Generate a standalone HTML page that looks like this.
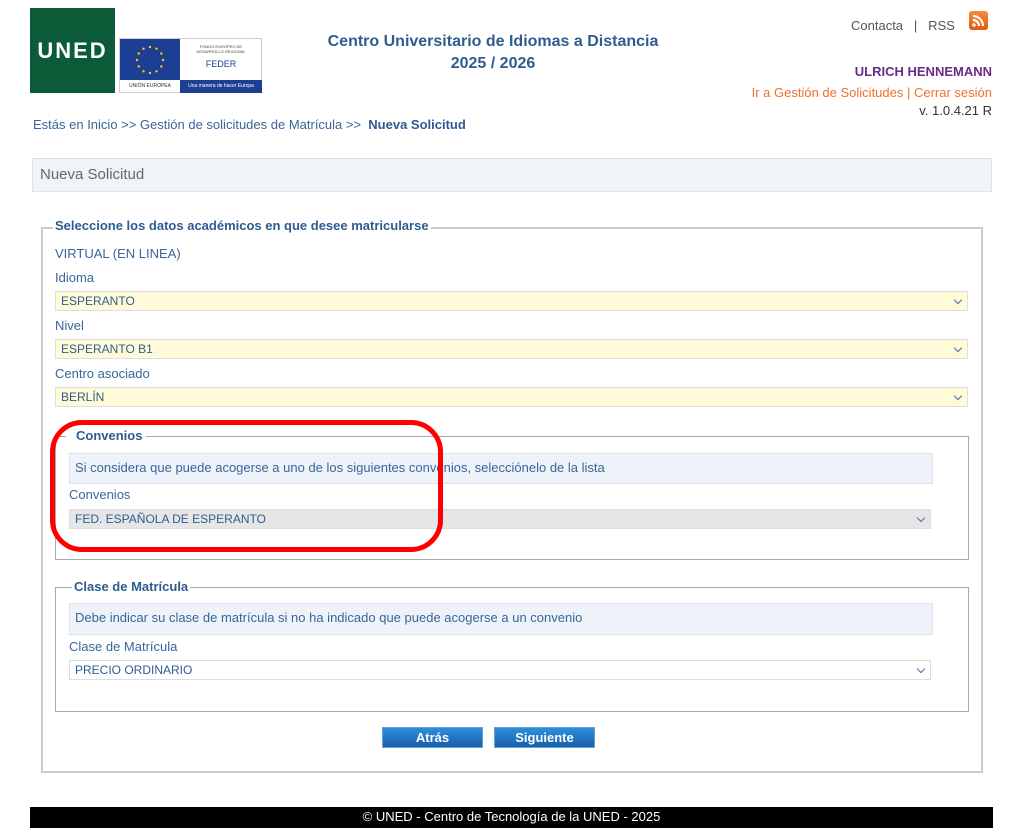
<!DOCTYPE html>
<html><head><meta charset="utf-8"><style>
*{margin:0;padding:0;box-sizing:border-box}
body{width:1024px;height:828px;background:#fff;font-family:"Liberation Sans",sans-serif;font-size:13px;color:#3a659a;position:relative;overflow:hidden}
.a{position:absolute;white-space:nowrap}
.box{position:absolute;border:1px solid #aaa}
.sel{position:absolute;border:1px solid #ddd;font-size:12px;padding:2px 5px;height:20px;line-height:15px;color:#2f5c8f}
.sel:after{content:"";position:absolute;right:6px;top:5px;width:5px;height:5px;border-right:1.5px solid #4a6ea0;border-bottom:1.5px solid #4a6ea0;transform:rotate(45deg)}
.y{background:#fffbd8}
.leg{position:absolute;background:#fff;padding:0 2px;font-weight:bold;color:#2f5c8f;font-size:13px}
.info{position:absolute;background:#eef3f9;border:1px solid #dbe4ee;padding:6px 5px;font-size:13px;color:#3a659a}
.btn{position:absolute;height:21px;width:101px;background:linear-gradient(#2c8fdc,#1a5fa8);color:#fff;font-weight:bold;font-size:13px;text-align:center;line-height:20px;border:1px solid #6aa0d0}
</style></head><body>
<div class="a" style="left:30px;top:8px;width:85px;height:85px;background:#0b5a38;color:#fff;font-weight:bold;font-size:22px;letter-spacing:2px;line-height:85px;text-align:center">UNED</div>
<div class="a" style="left:119px;top:38px;width:143px;height:55px;border:1px solid #ccd">
 <div class="a" style="left:0;top:0;width:60px;height:41px;background:#1c3f94"></div>
 <svg class="a" style="left:14px;top:5px" width="32" height="32"><g fill="#fc0"><circle cx="16" cy="3" r="1.2"/><circle cx="22.5" cy="4.7" r="1.2"/><circle cx="27.3" cy="9.5" r="1.2"/><circle cx="29" cy="16" r="1.2"/><circle cx="27.3" cy="22.5" r="1.2"/><circle cx="22.5" cy="27.3" r="1.2"/><circle cx="16" cy="29" r="1.2"/><circle cx="9.5" cy="27.3" r="1.2"/><circle cx="4.7" cy="22.5" r="1.2"/><circle cx="3" cy="16" r="1.2"/><circle cx="4.7" cy="9.5" r="1.2"/><circle cx="9.5" cy="4.7" r="1.2"/></g></svg>
 <div class="a" style="left:62px;top:5px;width:78px;text-align:center;font-size:4px;color:#444;line-height:5px">FONDO EUROPEO DE<br>DESARROLLO REGIONAL</div>
 <div class="a" style="left:62px;top:20px;width:78px;text-align:center;font-size:9px;color:#1c3f94">FEDER</div>
 <div class="a" style="left:0;top:42px;width:60px;text-align:center;font-size:5px;color:#333;line-height:11px">UNIÓN EUROPEA</div>
 <div class="a" style="left:60px;top:41px;width:82px;height:13px;background:#1c3f94;color:#fff;font-size:5px;line-height:13px;text-align:center">Una manera de hacer Europa</div>
</div>
<div class="a" style="left:300px;top:31px;width:386px;text-align:center;font-weight:bold;font-size:16px;color:#2f5c8f;line-height:22px">Centro Universitario de Idiomas a Distancia<br>2025 / 2026</div>
<div class="a" style="left:851px;top:18px;color:#555;font-size:13px">Contacta &nbsp;&nbsp;|&nbsp;&nbsp; RSS</div>
<div class="a" style="left:969px;top:11px;width:19px;height:19px;background:linear-gradient(#f88a3a,#e25a10);border-radius:3px"><svg width="19" height="19"><circle cx="5" cy="14" r="1.8" fill="#fff"/><path d="M4 9a6 6 0 0 1 6 6M4 5a10 10 0 0 1 10 10" stroke="#fff" stroke-width="2.2" fill="none"/></svg></div>
<div class="a" style="right:32px;top:64px;color:#6a2a8a;font-weight:bold;font-size:13px">ULRICH HENNEMANN</div>
<div class="a" style="right:32px;top:85px;color:#f07030;font-size:13px">Ir a Gestión de Solicitudes | Cerrar sesión</div>
<div class="a" style="right:32px;top:103px;color:#333;font-size:13px">v. 1.0.4.21 R</div>
<div class="a" style="left:33px;top:117px;font-size:13px">Estás en Inicio &gt;&gt; Gestión de solicitudes de Matrícula &gt;&gt; &nbsp;<b style="color:#2f5c8f">Nueva Solicitud</b></div>
<div class="a" style="left:32px;top:158px;width:960px;height:34px;background:#f0f4f9;border:1px solid #dde4ec;color:#666;font-size:15px;padding:7px 7px">Nueva Solicitud</div>

<div class="box" style="left:41px;top:227px;width:942px;height:546px;border:2px solid #ccc"></div>
<div class="leg" style="left:53px;top:218px">Seleccione los datos académicos en que desee matricularse</div>
<div class="a" style="left:55px;top:246px">VIRTUAL (EN LINEA)</div>
<div class="a" style="left:55px;top:270px">Idioma</div>
<div class="sel y" style="left:55px;top:291px;width:913px">ESPERANTO</div>
<div class="a" style="left:55px;top:318px">Nivel</div>
<div class="sel y" style="left:55px;top:339px;width:913px">ESPERANTO B1</div>
<div class="a" style="left:55px;top:366px">Centro asociado</div>
<div class="sel y" style="left:55px;top:387px;width:913px">BERLÍN</div>

<div class="box" style="left:55px;top:436px;width:914px;height:124px"></div>
<div class="leg" style="left:66px;top:428px;padding:0 4px 0 10px">Convenios</div>
<div class="info" style="left:69px;top:453px;width:864px;height:31px">Si considera que puede acogerse a uno de los siguientes convenios, selecciónelo de la lista</div>
<div class="a" style="left:69px;top:487px">Convenios</div>
<div class="sel" style="left:69px;top:509px;width:862px;background:#e6e6e6">FED. ESPAÑOLA DE ESPERANTO</div>
<div class="a" style="left:50px;top:420px;width:393px;height:132px;border:5px solid #f00;border-radius:32px"></div>

<div class="box" style="left:55px;top:587px;width:914px;height:125px"></div>
<div class="leg" style="left:72px;top:579px">Clase de Matrícula</div>
<div class="info" style="left:69px;top:603px;width:864px;height:32px">Debe indicar su clase de matrícula si no ha indicado que puede acogerse a un convenio</div>
<div class="a" style="left:69px;top:639px">Clase de Matrícula</div>
<div class="sel" style="left:69px;top:660px;width:862px;background:#fff">PRECIO ORDINARIO</div>

<div class="btn" style="left:382px;top:727px">Atrás</div>
<div class="btn" style="left:494px;top:727px">Siguiente</div>

<div class="a" style="left:30px;top:807px;width:963px;height:21px;background:#000;color:#fff;text-align:center;font-size:13px;line-height:19px">© UNED - Centro de Tecnología de la UNED - 2025</div>
</body></html>
